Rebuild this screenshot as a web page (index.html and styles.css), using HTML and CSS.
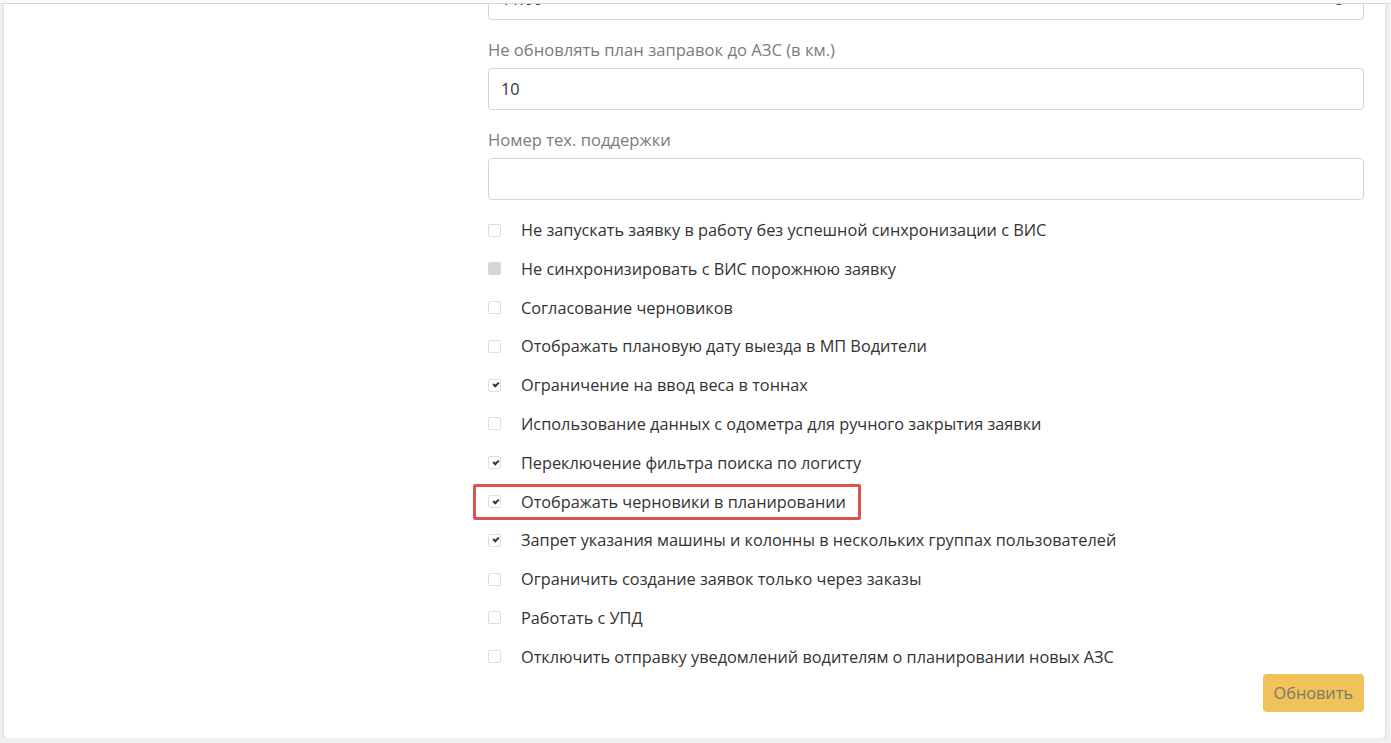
FILE: index.html
```html
<!DOCTYPE html>
<html lang="ru">
<head>
  <meta charset="UTF-8">
  <title>Настройки</title>
  <link rel="stylesheet" href="styles.css">
</head>
<body>
  <div class="topline"></div>
  <div class="card">
    <div class="card-body">
      <div class="side"></div>
      <form class="settings">
        <div class="field field-cut">
          <div class="input input-number">11:00
            <span class="spin"></span>
          </div>
        </div>
        <div class="field">
          <label class="label">Не обновлять план заправок до АЗС (в км.)</label>
          <div class="input">10</div>
        </div>
        <div class="field">
          <label class="label">Номер тех. поддержки</label>
          <div class="input"></div>
        </div>

        <ul class="checks">
          <li><span class="box"></span>Не запускать заявку в работу без успешной синхронизации с ВИС</li>
          <li><span class="box disabled"></span>Не синхронизировать с ВИС порожнюю заявку</li>
          <li><span class="box"></span>Согласование черновиков</li>
          <li><span class="box"></span>Отображать плановую дату выезда в МП Водители</li>
          <li><span class="box checked"></span>Ограничение на ввод веса в тоннах</li>
          <li><span class="box"></span>Использование данных с одометра для ручного закрытия заявки</li>
          <li><span class="box checked"></span>Переключение фильтра поиска по логисту</li>
          <li class="marked"><span class="box checked"></span>Отображать черновики в планировании</li>
          <li><span class="box checked"></span>Запрет указания машины и колонны в нескольких группах пользователей</li>
          <li><span class="box"></span>Ограничить создание заявок только через заказы</li>
          <li><span class="box"></span>Работать с УПД</li>
          <li><span class="box"></span>Отключить отправку уведомлений водителям о планировании новых АЗС</li>
        </ul>

        <div class="actions">
          <button type="button" class="btn-update">Обновить</button>
        </div>
      </form>
    </div>
  </div>
</body>
</html>
```

FILE: styles.css
```css
body { margin: 0; background: #f0f0f0; font-family: "Open Sans", Arial, sans-serif; font-size: 16.3px; color: #333; overflow: hidden; }
.topline { height: 3px; background: #fafafa; border-bottom: 1px solid #dcdcdc; }
.card { margin: 0 6px 0 4px; background: #fff; border-radius: 0 0 4px 4px; box-shadow: 0 1px 3px rgba(0,0,0,0.15); height: 734px; overflow: hidden; }
.card-body { display: grid; grid-template-columns: 484px 1fr; padding-right: 21px; }
.settings { margin-top: -26px; }
.field { margin-bottom: 18px; }
.label { display: block; line-height: 24px; margin-bottom: 6px; color: #777c80; font-size: 16.6px; }
.input { height: 40px; border: 1px solid #d5d5d5; border-radius: 4px; padding: 0 12px; line-height: 40px; color: #333; position: relative; }
.spin { position: absolute; right: 18px; top: 14px; width: 8px; height: 8px; border: 2px solid #444; border-radius: 50%; }
.checks { list-style: none; margin: 11px 0 0; padding: 0; }
.checks li { display: flex; align-items: center; height: 24px; margin-bottom: 14.8px; position: relative; }
.box { width: 13px; height: 13px; box-sizing: border-box; border: 1px solid #dedede; border-radius: 2px; margin-right: 20px; position: relative; flex: none; }
.box.disabled { background: #d6d6d6; border-color: #d6d6d6; }
.box.checked::after { content: ""; position: absolute; left: 3.5px; top: 2.5px; width: 4px; height: 2px; border-left: 2px solid #333; border-bottom: 2px solid #333; transform: rotate(-45deg); }
.checks li.marked::before { content: ""; position: absolute; left: -15px; top: -6px; width: 382px; height: 30px; border: 3px solid #d9534f; border-radius: 2px; }
.actions { display: flex; justify-content: flex-end; margin-top: -10px; }
.btn-update { background: #efc25a; border: 0; border-radius: 4px; height: 38px; padding: 0 11px; font-family: "Open Sans", Arial, sans-serif; font-size: 16.3px; color: #7d7869; }
```
